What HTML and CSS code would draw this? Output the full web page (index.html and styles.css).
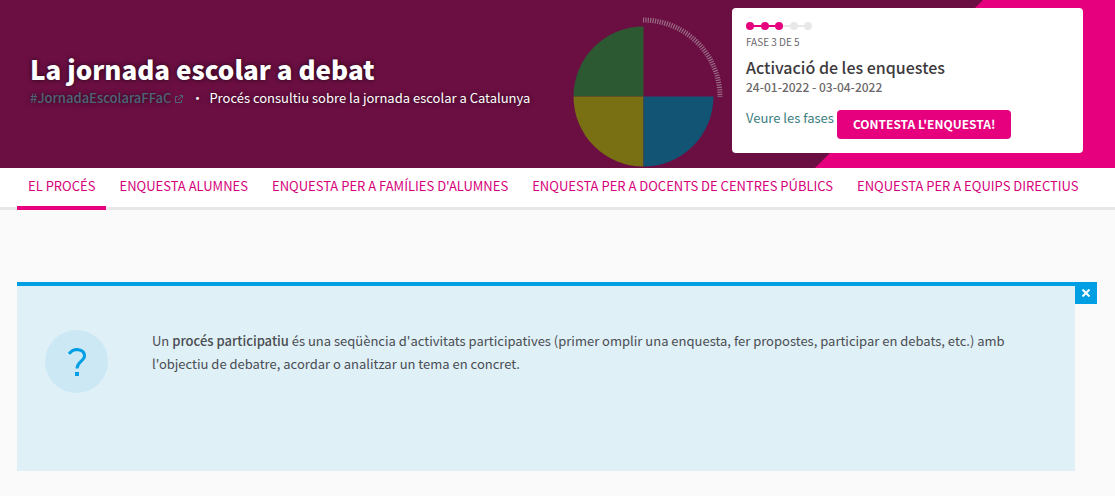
FILE: index.html
```html
<!DOCTYPE html>
<html lang="ca">
<head>
<meta charset="utf-8">
<meta name="viewport" content="width=device-width, initial-scale=1">
<title>La jornada escolar a debat</title>
<link rel="stylesheet" href="styles.css">
</head>
<body>
<header class="hero">
  <div class="hero-text">
    <h1 class="hero-title">La jornada escolar a debat</h1>
    <p class="hero-sub">
      <a class="hashtag" href="#hashtag">#JornadaEscolaraFFaC<svg class="ext" viewBox="0 0 8 8" aria-hidden="true"><path d="M3 1.5H.5v6h6V5M4.500 .5h3v3M7.500 .5L3 5"/></svg></a>
      <span class="dot">·</span>
      <span>Procés consultiu sobre la jornada escolar a Catalunya</span>
    </p>
  </div>
  <svg class="pie" viewBox="573 16 150 152" aria-hidden="true">
    <path fill="#2c5832" d="M643.500 96.500V26.500A70 70 0 0 0 573.500 96.500Z"/>
    <path fill="#787012" d="M643.500 96.500H573.500A70 70 0 0 0 643.500 166.500Z"/>
    <path fill="#125474" d="M643.500 96.500V166.500A70 70 0 0 0 713.500 96.500Z"/>
    <path class="ticks" d="M643 20A77 77 0 0 1 720 97"/>
  </svg>
  <section class="phase">
    <svg class="steps" viewBox="0 0 66 8" aria-hidden="true">
      <path stroke="#e8e8e8" stroke-width="2" d="M33 4H62"/>
      <path stroke="#e6007e" stroke-width="2" d="M4 4H33"/>
      <g fill="#e6007e"><circle cx="4" cy="4" r="4"/><circle cx="19" cy="4" r="4"/><circle cx="33" cy="4" r="4"/></g>
      <g fill="#e8e8e8"><circle cx="48" cy="4" r="4"/><circle cx="62" cy="4" r="4"/></g>
    </svg>
    <p class="phase-count">FASE 3 DE 5</p>
    <h2 class="phase-name">Activació de les enquestes</h2>
    <p class="phase-dates">24-01-2022 - 03-04-2022</p>
    <div class="phase-actions">
      <a class="phase-link" href="#fases">Veure les fases</a>
      <a class="cta" href="#enquesta">CONTESTA L'ENQUESTA!</a>
    </div>
  </section>
</header>
<nav class="tabs">
  <a class="tab active" href="#proces">EL PROCÉS</a>
  <a class="tab" href="#alumnes">ENQUESTA ALUMNES</a>
  <a class="tab" href="#families">ENQUESTA PER A FAMÍLIES D'ALUMNES</a>
  <a class="tab" href="#docents">ENQUESTA PER A DOCENTS DE CENTRES PÚBLICS</a>
  <a class="tab" href="#equips">ENQUESTA PER A EQUIPS DIRECTIUS</a>
</nav>
<main class="content">
  <section class="help">
    <div class="help-icon" aria-hidden="true">
      <svg viewBox="0 0 18 28"><path d="M1 6Q4 1.500 9 1.500Q16.500 2 16.500 8C16.500 13 9 13.500 9 20.500"/><path d="M7 24h4v4h-4z" class="q-dot"/></svg>
    </div>
    <p class="help-text">Un <strong>procés participatiu</strong> és una seqüència d'activitats participatives (primer omplir una enquesta, fer propostes, participar en debats, etc.) amb l'objectiu de debatre, acordar o analitzar un tema en concret.</p>
  </section>
  <button class="close" type="button" aria-label="Tanca"><svg viewBox="0 0 8 8" aria-hidden="true"><path d="M.5 .5L7.500 7.500M7.500 .5L.5 7.500"/></svg></button>
</main>
</body>
</html>
```
FILE: styles.css
```css
* { box-sizing: border-box; }
body {
  margin: 0;
  background: #fafafa;
  color: #3d393c;
  font-family: "Noto Sans CJK SC", "Noto Sans", sans-serif;
  font-size: 13px;
}
h1, h2, p { margin: 0; }
a { text-decoration: none; }

.hero {
  position: relative;
  display: flex;
  align-items: flex-start;
  padding: 8px 32px 0 30px;
  background: #6b0f42;
}
.hero::before {
  content: "";
  position: absolute;
  top: 0;
  right: 0;
  bottom: 0;
  width: 300px;
  background: #e6007e;
  clip-path: polygon(168px 0, 100% 0, 100% 100%, 0 100%);
}
.hero-text {
  flex: 1;
  padding-top: 43px;
  color: #fff;
  text-shadow: 0 0 5px rgba(0, 0, 0, .7);
}
.hero-title { font-size: 26px; line-height: 36px; font-weight: 900; }
.hero-sub {
  display: flex;
  padding-top: 1px;
  font-size: 13px;
  line-height: 20px;
  font-weight: 400;
  white-space: nowrap;
}
.hashtag { color: #4f6478; font-weight: 500; }
.ext { width: 8px; height: 8px; margin-left: 4px; fill: none; stroke: currentColor; }
.dot { width: 26px; padding-left: 2px; text-align: center; }
.pie { width: 150px; height: 152px; align-self: flex-end; margin-right: 9px; flex: none; }
.ticks { fill: none; stroke: #9a6c86; stroke-width: 5; stroke-dasharray: 1.2 1.2; }

.phase {
  position: relative;
  width: 351px;
  margin-bottom: 15px;
  padding: 14px;
  background: #fff;
  border-radius: 4px;
}
.steps { display: block; width: 66px; height: 8px; }
.phase-count { margin-top: 4px; font-size: 10px; line-height: 16px; color: #6b676a; }
.phase-name { margin-top: 5px; font-size: 16px; line-height: 24px; font-weight: 500; }
.phase-dates { font-size: 12px; line-height: 16px; font-weight: 500; color: #6b676a; }
.phase-actions { display: flex; gap: 3px; margin-top: 15px; }
.phase-link { font-size: 13px; line-height: 16px; color: #3b7e80; }
.cta {
  padding: 0 16px 2px;
  border-radius: 4px;
  background: #e6007e;
  color: #fff;
  font-size: 12px;
  line-height: 27px;
  font-weight: 700;
}

.tabs {
  display: flex;
  gap: 2px;
  padding: 0 17px;
  background: #fff;
  box-shadow: inset 0 -3px #e8e8e8;
  white-space: nowrap;
}
.tab {
  padding: 8px 11px 10px;
  border-bottom: 4px solid transparent;
  color: #d6007a;
  font-size: 13px;
  line-height: 20px;
}
.tab.active { border-color: #e6007e; }

.content { display: flex; align-items: flex-start; padding: 72px 18px 25px 17px; }
.help {
  flex: 1;
  display: flex;
  align-items: flex-start;
  gap: 44px;
  padding: 43px 56px 78px 28px;
  border-top: 4px solid #009fe3;
  background: #dff0f7;
}
.help-icon {
  display: grid;
  place-items: center;
  flex: none;
  width: 63px;
  height: 63px;
  margin-top: 1px;
  border-radius: 50%;
  background: #cce8f5;
}
.help-icon svg { width: 18px; height: 28px; fill: none; stroke: #009fe3; stroke-width: 3; }
.help-icon .q-dot { fill: #009fe3; stroke: none; }
.help-text { font-size: 13px; line-height: 23px; color: #4a4d52; }
.help-text strong { font-weight: 500; }
.close {
  display: grid;
  place-items: center;
  width: 22px;
  height: 22px;
  padding: 0;
  border: 0;
  background: #009fe3;
}
.close svg { width: 8px; height: 8px; fill: none; stroke: #fff; stroke-width: 2; }
```
